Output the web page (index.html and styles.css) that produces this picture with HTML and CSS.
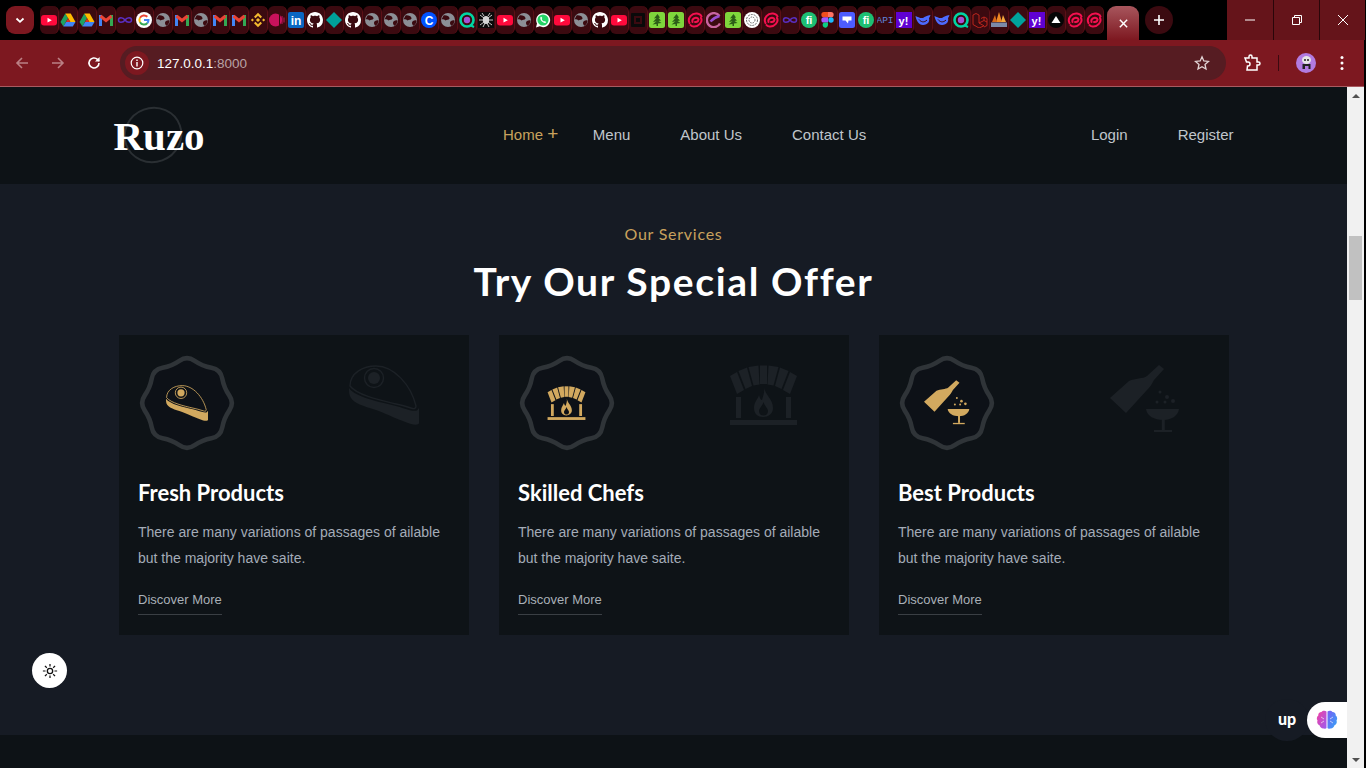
FILE: index.html
```html
<!DOCTYPE html>
<html lang="en">
<head>
<meta charset="utf-8">
<title>Ruzo</title>
<link rel="stylesheet" href="styles.css">
</head>
<body>
<svg class="defs" aria-hidden="true">
  <defs>
    <linearGradient id="brainL" x1="0" y1="0" x2="1" y2="1"><stop offset="0" stop-color="#f43fa0"/><stop offset="1" stop-color="#9a5cf0"/></linearGradient>
    <linearGradient id="brainR" x1="0" y1="0" x2="1" y2="1"><stop offset="0" stop-color="#7a5cf5"/><stop offset="1" stop-color="#2fa8f5"/></linearGradient>
    <symbol id="yt" viewBox="0 0 16 16"><rect y="3" width="16" height="10.500" rx="3" fill="#ff0a3c"/><polygon points="6.500,5.800 10.800,8.200 6.500,10.600" fill="#fff"/></symbol>
    <symbol id="drive" viewBox="0 0 16 16"><polygon points="5.300,1.500 8,6.300 3.400,14.500 .5,10" fill="#1ea362"/><polygon points="5.300,1.500 10.700,1.500 15.500,10 10.300,10" fill="#ffba00"/><polygon points="3.400,14.500 6,10 15.500,10 12.800,14.500" fill="#4285f4"/><polygon points="8,6.300 10.300,10 6,10" fill="#d93025"/></symbol>
    <symbol id="gmail" viewBox="0 0 16 16"><rect x="1" y="3" width="3" height="11" fill="#4285f4"/><rect x="12" y="3" width="3" height="11" fill="#34a853"/><path d="M2.500 4 8 8.500 13.500 4" fill="none" stroke="#ea4335" stroke-width="3"/></symbol>
    <symbol id="inf" viewBox="0 0 16 16"><path d="M8 8C6 5 1.500 5 1.500 8S6 11 8 8 14.500 5 14.500 8 10 11 8 8Z" fill="none" stroke="#5a2fc2" stroke-width="1.500"/></symbol>
    <symbol id="google" viewBox="0 0 16 16"><circle cx="8" cy="8" r="8" fill="#fff"/><path d="M11.300 4.800A4.600 4.600 0 0 0 4 5.800" fill="none" stroke="#ea4335" stroke-width="2"/><path d="M4 5.800A4.600 4.600 0 0 0 4 10.200" fill="none" stroke="#fbbc05" stroke-width="2"/><path d="M4 10.200A4.600 4.600 0 0 0 11.400 11" fill="none" stroke="#34a853" stroke-width="2"/><path d="M8 8H12.500A4.600 4.600 0 0 1 11.400 11" fill="none" stroke="#4285f4" stroke-width="2"/></symbol>
    <symbol id="globe" viewBox="0 0 16 16"><circle cx="8" cy="8" r="7" fill="#8c8f96"/><path d="M3.500 3.500C6 3 9 4 9.500 6 9.800 8 6.500 7.500 5.500 8.500 4.500 7.500 3 7 1.500 7.500ZM14.500 8.500C12.500 8 10 9 10 11 10 12.500 11 13.500 11.500 13.800 13.500 12.500 14.500 10.500 14.500 8.500Z" fill="#3b0a10"/></symbol>
    <symbol id="binance" viewBox="0 0 16 16"><g fill="#f3ba2f"><rect x="6.500" y="6.500" width="3" height="3" transform="rotate(45 8 8)"/><path d="M8 .8 12 4.800 10.500 6.300 8 3.800 5.500 6.300 4 4.800Z"/><path d="M8 15.200 12 11.200 10.500 9.700 8 12.200 5.500 9.700 4 11.200Z"/><rect x="1.300" y="6.900" width="2.200" height="2.200" transform="rotate(45 2.400 8)"/><rect x="12.500" y="6.900" width="2.200" height="2.200" transform="rotate(45 13.600 8)"/></g></symbol>
    <symbol id="pink" viewBox="0 0 16 16"><circle cx="6.500" cy="8" r="6.500" fill="#c8125c"/><rect x="10" y="3" width="1" height="10" fill="#3b0a10"/><rect x="12.500" y="4" width="1" height="8" fill="#c8125c"/><rect x="14.500" y="5.500" width="1" height="5" fill="#c8125c"/></symbol>
    <symbol id="in" viewBox="0 0 16 16"><rect width="16" height="16" rx="2" fill="#0a66c2"/><text x="8" y="13" class="fav-text" font-size="12" fill="#fff">in</text></symbol>
    <symbol id="gh" viewBox="0 0 16 16"><path fill="#fff" d="M8 0C3.580 0 0 3.580 0 8c0 3.540 2.290 6.530 5.470 7.590.4.070.55-.17.55-.38 0-.19-.01-.82-.01-1.490-2.010.37-2.530-.49-2.690-.94-.09-.23-.48-.94-.82-1.130-.28-.15-.68-.52-.01-.53.63-.01 1.080.58 1.230.82.720 1.210 1.870.87 2.330.66.070-.52.28-.87.51-1.070-1.780-.2-3.640-.89-3.640-3.950 0-.87.31-1.590.82-2.150-.08-.2-.36-1.020.08-2.120 0 0 .67-.21 2.200.82.64-.18 1.320-.27 2-.27.68 0 1.360.09 2 .27 1.530-1.040 2.200-.82 2.200-.82.44 1.100.16 1.920.08 2.120.51.56.82 1.270.82 2.150 0 3.070-1.870 3.750-3.650 3.950.29.25.54.73.54 1.480 0 1.070-.01 1.930-.01 2.200 0 .21.15.46.55.38A8.013 8.013 0 0 0 16 8c0-4.420-3.580-8-8-8z"/></symbol>
    <symbol id="dia" viewBox="0 0 16 16"><polygon points="8,0 16,8 8,16 0,8" fill="#00a19a"/></symbol>
    <symbol id="coin" viewBox="0 0 16 16"><circle cx="8" cy="8" r="8" fill="#0052ff"/><text x="8" y="12.500" class="fav-text" font-size="12" fill="#fff">C</text></symbol>
    <symbol id="q" viewBox="0 0 16 16"><circle cx="8" cy="8" r="6.500" fill="none" stroke="#00d6a3" stroke-width="2.600"/><circle cx="8" cy="8" r="3.200" fill="#a64fd6"/><path d="M11 13 15 15" stroke="#00d6a3" stroke-width="2"/></symbol>
    <symbol id="spider" viewBox="0 0 16 16"><rect width="16" height="16" fill="#0a0a0a"/><g stroke="#c9c9c9" stroke-width="1"><path d="M2 3 6 6M14 3 10 6M1 8H15M2 13 6 10M14 13 10 10M4 1 6 4M12 1 10 4M5 15 7 11M11 15 9 11"/></g><ellipse cx="8" cy="8" rx="3.200" ry="4" fill="#d5d5d5"/></symbol>
    <symbol id="wa" viewBox="0 0 16 16"><path d="M1 15.500 2 11.500A7 7 0 1 1 4.800 14.300Z" fill="#fff"/><circle cx="8" cy="8" r="5.600" fill="#25d366"/><path d="M5.500 5C5 6.500 5.500 8 7 9.500S10 11.300 11.300 10.500L10 9 9 9.500C8 9 7 8 6.700 7L7.300 6 6.300 4.700Z" fill="#fff"/></symbol>
    <symbol id="sq" viewBox="0 0 16 16"><rect x="1" y="1" width="14" height="14" rx="1" fill="#0a0a0a"/><rect x="5" y="5" width="6" height="6" fill="none" stroke="#3b0a10" stroke-width="2"/></symbol>
    <symbol id="tree" viewBox="0 0 16 16"><rect width="16" height="16" rx="2.500" fill="#7fd63c"/><path d="M8.500 2 5 6.500 7.500 6 4 10 7.500 9.200 3.500 12.500 7.500 12V14H9V11.500L12.500 11 9.500 9 12 8.500 9.500 6 11 5.500Z" fill="#2c5c18"/></symbol>
    <symbol id="swirl" viewBox="0 0 16 16"><g fill="none" stroke="#f5104f" stroke-width="2" stroke-linecap="round"><path d="M2.500 11C0 6 5 1 10 1.500 12.500 1.800 14 3 14.500 4.500"/><path d="M14 6C16 10 11.500 15 6.500 14.500 5 14.300 4 13.800 3.500 13"/><path d="M5.500 10C4.500 7 8.500 4.500 11 6.500 12.500 8 10.500 10.500 8 10"/></g></symbol>
    <symbol id="e" viewBox="0 0 16 16"><g fill="none" stroke-width="2.400"><path d="M13.500 4A7 7 0 1 0 14 11.500" stroke="#c8659f"/><path d="M4.500 9.500C7 6.500 10 5 13.500 4" stroke="#9a4fd0"/></g></symbol>
    <symbol id="oai" viewBox="0 0 16 16"><circle cx="8" cy="8" r="8" fill="#fff"/><g fill="none" stroke="#666"><circle cx="8" cy="8" r="5.500" stroke-dasharray="2 1"/><circle cx="8" cy="8" r="3" stroke-dasharray="1.500 1"/></g></symbol>
    <symbol id="fn" viewBox="0 0 16 16"><circle cx="8" cy="8" r="8" fill="#1dbf73"/><text x="8" y="12" class="fav-text" font-size="11" fill="#fff">fi</text></symbol>
    <symbol id="figma" viewBox="0 0 16 16"><path d="M4 0H8V5.300H4A2.600 2.600 0 0 1 4 0Z" fill="#f24e1e"/><path d="M8 0H11A2.600 2.600 0 0 1 11 5.300H8Z" fill="#ff7262"/><path d="M4 5.300H8V10.600H4A2.600 2.600 0 0 1 4 5.300Z" fill="#a259ff"/><circle cx="11" cy="8" r="2.700" fill="#1abcfe"/><path d="M4 10.600H8V13.300A2.700 2.700 0 1 1 4 10.600Z" fill="#0acf83"/></symbol>
    <symbol id="blue" viewBox="0 0 16 16"><rect width="16" height="16" rx="2.500" fill="#4d5cff"/><path d="M3.500 4.500H12.500V8.500L9.500 8.500 9 11.500 6.500 8.500H3.500Z" fill="#fff"/></symbol>
    <symbol id="api" viewBox="0 0 16 16"><text x="8" y="11" class="fav-mono" font-size="9.500" fill="#5f84dc">API</text></symbol>
    <symbol id="yahoo" viewBox="0 0 16 16"><rect width="16" height="16" fill="#6001d2"/><text x="7.500" y="12.500" class="fav-text" font-size="11" fill="#fff">y!</text></symbol>
    <symbol id="whale" viewBox="0 0 16 16"><path d="M.5 4C3 5 5 6.500 8 6 10 4.500 12 3.500 15.500 3 15 4.500 14.500 5.500 14 6 15 9 13 13 8 13 3.500 13 1 8 .5 4Z" fill="#4d6bfe"/><path d="M4 7.500C6 10 9 11 12 8" fill="none" stroke="#3b0a10"/></symbol>
    <symbol id="laravel" viewBox="0 0 16 16"><g fill="none" stroke="#c9281e" stroke-width=".9"><path d="M1 3 4 1.500 7 3V11L12 13.800 7 16 1 12.500ZM7 11 12 8.500 15 10V13.500L12 15M12 5 15 6.500V10M9 6.500 12 5V8.500"/></g></symbol>
    <symbol id="fire" viewBox="0 0 16 16"><polygon points="8,0 11,10 5,10" fill="#f08a24"/><polygon points="4,3 6,10 1,10" fill="#d96a18"/><polygon points="12,3 15,10 10,10" fill="#f5a83c"/><rect y="10.500" width="16" height="4.500" fill="#7c8aa8"/></symbol>
    <symbol id="vercel" viewBox="0 0 16 16"><circle cx="8" cy="8" r="8" fill="#050505"/><polygon points="8,4 12.500,11 3.500,11" fill="#fff"/></symbol>

    <symbol id="meat" viewBox="0 0 70 60">
      <path d="M1 21C1 8 14 1 27 1 45 1 62 20 67 41 67 44 65 44 62 43 56 41 50 39.500 45 38.500 30 35 8 30 1 21Z" fill="none" stroke="currentColor" stroke-width="1.400"/>
      <circle cx="25" cy="13" r="9.500" fill="none" stroke="currentColor" stroke-width="1.400"/>
      <circle cx="25" cy="13" r="6" fill="currentColor"/>
      <path d="M0 23C6 32 30 37 45 40.500 54 42.500 62 47 68 45.500L70 43V58C70 60 66 60 62 59 50 55 40 50 27 45 14 41 5 38 2 33 0 30 0 27 0 23Z" fill="currentColor"/>
    </symbol>
    <symbol id="oven" viewBox="0 0 69 60">
      <g fill="currentColor">
        <polygon points="1,11 8,7 15,25 8,29"/>
        <polygon points="9.500,6 18,2.500 23,21 16.500,24"/>
        <polygon points="19.500,2 29.500,.5 30.500,19.500 24.500,20.500"/>
        <polygon points="31,.5 38,.5 38,19 31,19"/>
        <polygon points="49.500,2 39.500,.5 38.500,19.500 44.500,20.500"/>
        <polygon points="59.500,6 51,2.500 46,21 52.500,24"/>
        <polygon points="68,11 61,7 54,25 61,29"/>
        <rect x="7" y="32" width="5" height="21"/>
        <rect x="57" y="32" width="5" height="21"/>
        <rect x="1" y="55" width="67" height="5"/>
        <path fill-rule="evenodd" d="M35 22C36 30 44 34 44 43 44 49 39 52 34 52 29 52 25 49 25 43 25 37 29 34 30 30 31 34 32 35 33 35 34 31 36 27 35 22ZM34.500 37C33.500 41 30 43 30 46 30 49 32 50.500 34.500 50.500S39 49 39 46C39 43 35.500 41 34.500 37Z"/>
      </g>
    </symbol>
    <symbol id="bottle" viewBox="0 0 70 68">
      <g fill="currentColor">
        <path d="M49 0 54 4 44 15C42 19 40 22 37 25L16 48 0 33 19 16C25 13 33 14 37 11Z"/>
        <path d="M36 44H69C68 51 61 55 53.500 55 44 55 37 51 36 44Z"/>
        <rect x="51.800" y="54" width="3" height="11"/>
        <rect x="44" y="65" width="18" height="2"/>
        <circle cx="50" cy="27" r="1.500"/><circle cx="57" cy="32" r="2"/><circle cx="47" cy="37" r="1.500"/><circle cx="55" cy="37" r="1.500"/><circle cx="63" cy="36" r="2"/>
      </g>
    </symbol>
    <symbol id="wave" viewBox="1 1 98 98">
      <path d="M42.350 7.770Q50 2.500 57.660 7.770Q65.310 13.040 74.450 14.730Q83.590 16.410 85.280 25.550Q86.960 34.690 92.230 42.350Q97.500 50 92.230 57.660Q86.960 65.310 85.280 74.450Q83.590 83.590 74.450 85.280Q65.310 86.960 57.660 92.230Q50 97.500 42.350 92.230Q34.690 86.960 25.550 85.280Q16.410 83.590 14.730 74.450Q13.040 65.310 7.770 57.660Q2.500 50 7.770 42.350Q13.040 34.690 14.730 25.550Q16.410 16.410 25.550 14.730Q34.690 13.040 42.350 7.770Z" fill="#0d1117" stroke="#2f3438" stroke-width="4.600"/>
    </symbol>
  </defs>
</svg>

<div class="window">
  <div class="tabstrip">
    <button class="tab-search" aria-label="Search tabs"><svg viewBox="0 0 12 12"><path d="M2.500 4.500 6 7.800 9.500 4.500" fill="none" stroke="#fff" stroke-width="1.800"/></svg></button>
    <div class="tabs">
      <span class="fav"><svg><use href="#yt"/></svg></span>
      <span class="fav"><svg><use href="#drive"/></svg></span>
      <span class="fav"><svg><use href="#drive"/></svg></span>
      <span class="fav"><svg><use href="#gmail"/></svg></span>
      <span class="fav"><svg><use href="#inf"/></svg></span>
      <span class="fav"><svg><use href="#google"/></svg></span>
      <span class="fav"><svg><use href="#globe"/></svg></span>
      <span class="fav"><svg><use href="#gmail"/></svg></span>
      <span class="fav"><svg><use href="#globe"/></svg></span>
      <span class="fav"><svg><use href="#gmail"/></svg></span>
      <span class="fav"><svg><use href="#gmail"/></svg></span>
      <span class="fav"><svg><use href="#binance"/></svg></span>
      <span class="fav"><svg><use href="#pink"/></svg></span>
      <span class="fav"><svg><use href="#in"/></svg></span>
      <span class="fav"><svg><use href="#gh"/></svg></span>
      <span class="fav"><svg><use href="#dia"/></svg></span>
      <span class="fav"><svg><use href="#gh"/></svg></span>
      <span class="fav"><svg><use href="#globe"/></svg></span>
      <span class="fav"><svg><use href="#globe"/></svg></span>
      <span class="fav"><svg><use href="#globe"/></svg></span>
      <span class="fav"><svg><use href="#coin"/></svg></span>
      <span class="fav"><svg><use href="#globe"/></svg></span>
      <span class="fav"><svg><use href="#q"/></svg></span>
      <span class="fav"><svg><use href="#spider"/></svg></span>
      <span class="fav"><svg><use href="#yt"/></svg></span>
      <span class="fav"><svg><use href="#globe"/></svg></span>
      <span class="fav"><svg><use href="#wa"/></svg></span>
      <span class="fav"><svg><use href="#yt"/></svg></span>
      <span class="fav"><svg><use href="#globe"/></svg></span>
      <span class="fav"><svg><use href="#gh"/></svg></span>
      <span class="fav"><svg><use href="#yt"/></svg></span>
      <span class="fav"><svg><use href="#sq"/></svg></span>
      <span class="fav"><svg><use href="#tree"/></svg></span>
      <span class="fav"><svg><use href="#tree"/></svg></span>
      <span class="fav"><svg><use href="#swirl"/></svg></span>
      <span class="fav"><svg><use href="#e"/></svg></span>
      <span class="fav"><svg><use href="#tree"/></svg></span>
      <span class="fav"><svg><use href="#oai"/></svg></span>
      <span class="fav"><svg><use href="#swirl"/></svg></span>
      <span class="fav"><svg><use href="#inf"/></svg></span>
      <span class="fav"><svg><use href="#fn"/></svg></span>
      <span class="fav"><svg><use href="#figma"/></svg></span>
      <span class="fav"><svg><use href="#blue"/></svg></span>
      <span class="fav"><svg><use href="#fn"/></svg></span>
      <span class="fav"><svg><use href="#api"/></svg></span>
      <span class="fav"><svg><use href="#yahoo"/></svg></span>
      <span class="fav"><svg><use href="#whale"/></svg></span>
      <span class="fav"><svg><use href="#whale"/></svg></span>
      <span class="fav"><svg><use href="#q"/></svg></span>
      <span class="fav"><svg><use href="#laravel"/></svg></span>
      <span class="fav"><svg><use href="#fire"/></svg></span>
      <span class="fav"><svg><use href="#dia"/></svg></span>
      <span class="fav"><svg><use href="#yahoo"/></svg></span>
      <span class="fav"><svg><use href="#vercel"/></svg></span>
      <span class="fav"><svg><use href="#swirl"/></svg></span>
      <span class="fav"><svg><use href="#swirl"/></svg></span>
    </div>
    <div class="tab-active"><svg viewBox="0 0 12 12"><path d="M2 2 10 10M10 2 2 10" stroke="#fff" stroke-width="1.600"/></svg></div>
    <button class="new-tab" aria-label="New tab"><svg viewBox="0 0 12 12"><path d="M6 1V11M1 6H11" stroke="#fff" stroke-width="1.600"/></svg></button>
    <div class="win-controls">
      <span class="win-btn"><svg viewBox="0 0 12 12"><path d="M1 6H11" stroke="#fff"/></svg></span>
      <span class="win-btn"><svg viewBox="0 0 12 12"><path d="M1.500 3.500H8.500V10.500H1.500ZM3.500 3.500V1.500H10.500V8.500H8.500" fill="none" stroke="#fff"/></svg></span>
      <span class="win-btn"><svg viewBox="0 0 12 12"><path d="M1 1 11 11M11 1 1 11" stroke="#fff"/></svg></span>
    </div>
  </div>

  <div class="toolbar">
    <span class="tool tool-dim"><svg viewBox="0 0 16 16"><path d="M14 8H3M8 3 3 8 8 13" fill="none" stroke="currentColor" stroke-width="1.600"/></svg></span>
    <span class="tool tool-dim"><svg viewBox="0 0 16 16"><path d="M2 8H13M8 3 13 8 8 13" fill="none" stroke="currentColor" stroke-width="1.600"/></svg></span>
    <span class="tool"><svg viewBox="0 0 16 16"><path d="M13 8A5 5 0 1 1 11.500 4.400L13 6" fill="none" stroke="currentColor" stroke-width="1.600"/><path d="M13.600 2V6.600H9Z" fill="currentColor"/></svg></span>
    <div class="omnibox">
      <span class="site-info"><svg viewBox="0 0 14 14"><circle cx="7" cy="7" r="5.800" fill="none" stroke="#fff" stroke-width="1.200"/><path d="M7 6V10.500M7 3.600V5" stroke="#fff" stroke-width="1.400"/></svg></span>
      <span class="url">127.0.0.1<span class="url-port">:8000</span></span>
      <svg class="star" viewBox="0 0 16 16"><path d="M8 1.800 9.800 6 14.500 6.400 11 9.500 12 14 8 11.700 4 14 5 9.500 1.500 6.400 6.200 6Z" fill="none" stroke="#e2d4d5" stroke-width="1.300"/></svg>
    </div>
    <div class="tool-right">
      <svg class="puzzle" viewBox="0 0 18 18"><path d="M2 4H6V2.500A1.500 1.500 0 0 1 9 2.500V4H14V8H15.500A1.500 1.500 0 0 1 15.500 11H14V16H4L4.500 12H5A2 2 0 0 0 5 8H3.500Z" fill="none" stroke="#fff" stroke-width="1.500"/></svg>
      <span class="tool-sep"></span>
      <span class="avatar"><svg viewBox="0 0 20 20"><circle cx="10" cy="10" r="10" fill="#b27be0"/><ellipse cx="10.500" cy="7" rx="4.500" ry="4" fill="#e6e6e6"/><path d="M6.500 16V11H14.500V16H12.500V13H9V16Z" fill="#222"/><circle cx="9" cy="7" r="1" fill="#222"/><circle cx="12" cy="7" r="1" fill="#222"/></svg></span>
      <svg class="kebab" viewBox="0 0 4 16"><circle cx="2" cy="2.500" r="1.500" fill="#fff"/><circle cx="2" cy="8" r="1.500" fill="#fff"/><circle cx="2" cy="13.500" r="1.500" fill="#fff"/></svg>
    </div>
  </div>

  <div class="viewport">
    <div class="page">
      <header class="site-header">
        <div class="header-inner">
          <a class="logo"><svg class="logo-ring" viewBox="0 0 60 58"><ellipse cx="30" cy="29" rx="28.500" ry="27" fill="none" stroke="#2a2f33" stroke-width="2" transform="rotate(-20 30 29)"/></svg><span class="logo-text">Ruzo</span></a>
          <nav class="nav">
            <a class="nav-link nav-home">Home <span class="nav-plus">+</span></a>
            <a class="nav-link">Menu</a>
            <a class="nav-link">About Us</a>
            <a class="nav-link">Contact Us</a>
          </nav>
          <div class="auth">
            <a class="nav-link">Login</a>
            <a class="nav-link">Register</a>
          </div>
        </div>
      </header>

      <section class="services">
        <p class="eyebrow">Our Services</p>
        <h1 class="section-title">Try Our Special Offer</h1>
        <div class="cards">
          <article class="card">
            <div class="card-icons">
              <div class="badge"><svg class="badge-shape"><use href="#wave"/></svg><svg class="icon-meat"><use href="#meat"/></svg></div>
              <svg class="ghost ghost-meat"><use href="#meat"/></svg>
            </div>
            <h2 class="card-title">Fresh Products</h2>
            <p class="card-text">There are many variations of passages of ailable but the majority have saite.</p>
            <a class="card-link">Discover More</a>
          </article>
          <article class="card">
            <div class="card-icons">
              <div class="badge"><svg class="badge-shape"><use href="#wave"/></svg><svg class="icon-oven"><use href="#oven"/></svg></div>
              <svg class="ghost ghost-oven"><use href="#oven"/></svg>
            </div>
            <h2 class="card-title">Skilled Chefs</h2>
            <p class="card-text">There are many variations of passages of ailable but the majority have saite.</p>
            <a class="card-link">Discover More</a>
          </article>
          <article class="card">
            <div class="card-icons">
              <div class="badge"><svg class="badge-shape"><use href="#wave"/></svg><svg class="icon-bottle"><use href="#bottle"/></svg></div>
              <svg class="ghost ghost-bottle"><use href="#bottle"/></svg>
            </div>
            <h2 class="card-title">Best Products</h2>
            <p class="card-text">There are many variations of passages of ailable but the majority have saite.</p>
            <a class="card-link">Discover More</a>
          </article>
        </div>
      </section>
      <footer class="next-section"></footer>

      <button class="theme-toggle" aria-label="Toggle theme"><svg viewBox="0 0 18 18"><circle cx="9" cy="9" r="3" fill="none" stroke="#111" stroke-width="1.500"/><path d="M9 1V4M9 14V17M1 9H4M14 9H17M3.300 3.300 5.400 5.400M12.600 12.600 14.700 14.700M14.700 3.300 12.600 5.400M5.400 12.600 3.300 14.700" stroke="#111" stroke-width="1.400"/></svg></button>
      <span class="up-badge">up</span>
      <span class="brain-pill"><svg viewBox="0 0 22 20"><path d="M10.500 1.500C9 .3 6.500.5 5.500 2 3.500 2 2 3.500 2.300 5.500.7 6.800.3 9 1.500 10.500.7 12.500 1.500 14.500 3.500 15.300 4 17.500 6 19 8 18.500 9 19 10 18.800 10.500 18Z" fill="url(#brainL)"/><path d="M11.500 1.500C13 .3 15.500.5 16.500 2 18.500 2 20 3.500 19.700 5.500 21.300 6.800 21.700 9 20.500 10.500 21.300 12.500 20.500 14.500 18.500 15.300 18 17.500 16 19 14 18.500 13 19 12 18.800 11.500 18Z" fill="url(#brainR)"/><path d="M5 7 8 9M5 13 8 11M17 7 14 9M17 13 14 11" stroke="#fff" stroke-opacity=".6" fill="none"/></svg></span>
    </div>
    <div class="scrollbar">
      <span class="sb-btn"><span class="sb-up"></span></span>
      <div class="sb-track"><span class="sb-thumb"></span></div>
      <span class="sb-btn"><span class="sb-down"></span></span>
    </div>
  </div>
</div>
</body>
</html>
```

FILE: styles.css
```css
* { box-sizing: border-box; }
html, body { margin: 0; height: 768px; overflow: hidden; background: #000; }
body { font-family: "Liberation Sans", Arial, sans-serif; }
.defs { width: 0; height: 0; overflow: hidden; position: absolute; }
a { color: inherit; text-decoration: none; }
button { border: 0; padding: 0; }
svg { display: block; }
.fav-text { font-family: "Liberation Sans", sans-serif; font-weight: 700; text-anchor: middle; }
.fav-mono { font-family: "Liberation Mono", monospace; text-anchor: middle; }

.window { width: 1366px; height: 768px; display: flex; flex-direction: column; }

/* tab strip */
.tabstrip { height: 40px; flex: none; display: flex; align-items: flex-start; padding: 6px 0 0 6px; background: #000; }
.tab-search { width: 28px; height: 28px; background: #7d1820; border-radius: 9px; display: grid; place-items: center; margin-right: 6px; flex: none; }
.tab-search svg { width: 12px; height: 12px; }
.tabs { display: flex; width: 1064px; flex: none; margin-right: 3px; }
.fav { width: 19px; height: 28px; flex: none; display: grid; place-items: center; background: #3b0a10; border-radius: 6px; border-right: 1px solid #5c1017; }
.fav svg { width: 16px; height: 16px; }
.tab-active { width: 32px; height: 34px; flex: none; border-radius: 9px 9px 0 0; background: linear-gradient(#a8565d, #7d1820); display: grid; place-items: center; }
.tab-active svg { width: 11px; height: 11px; }
.new-tab { width: 28px; height: 28px; flex: none; border-radius: 50%; background: #3b0a10; display: grid; place-items: center; margin-left: 6px; }
.new-tab svg { width: 12px; height: 12px; }
.win-controls { display: flex; margin: -6px 0 0 54px; height: 40px; flex: none; }
.win-btn { width: 46px; height: 40px; background: #65141a; display: grid; place-items: center; border-left: 1px solid #2a0609; }
.win-btn:first-child { border-left: 0; }
.win-btn svg { width: 12px; height: 12px; }

/* toolbar */
.toolbar { height: 47px; width: 1364px; flex: none; display: flex; align-items: center; padding: 0 0 1px 4px; background: #7d1820; border-bottom: 1px solid #a85a60; }
.tool { width: 36px; height: 36px; display: grid; place-items: center; color: #fff; flex: none; }
.tool-dim { color: #bb8085; }
.tool svg { width: 16px; height: 16px; }
.omnibox { width: 1106px; height: 34px; margin-left: 8px; flex: none; display: flex; align-items: center; background: #561c22; border-radius: 17px; padding: 0 16px 0 5px; }
.site-info { width: 24px; height: 24px; border-radius: 50%; background: #7d1820; display: grid; place-items: center; }
.site-info svg { width: 14px; height: 14px; }
.url { font-size: 13.5px; line-height: 18px; padding-top: 2px; color: #fff; margin-left: 8px; }
.url-port { color: #b9a3a5; }
.star { width: 16px; height: 16px; margin-left: auto; }
.tool-right { display: flex; align-items: center; margin-left: 17px; }
.puzzle { width: 18px; height: 18px; }
.tool-sep { width: 1px; height: 16px; background: #3b0a10; margin: 0 17px 0 17px; }
.avatar { width: 20px; height: 20px; }
.kebab { width: 4px; height: 16px; margin-left: 24px; }

/* page */
.viewport { flex: 1; width: 1364px; display: flex; min-height: 0; }
.page { position: relative; flex: 1; overflow: hidden; background: #161b24; display: flex; flex-direction: column; }
.site-header { height: 97px; flex: none; background: #0d1216; }
.header-inner { width: 1120px; height: 97px; margin: 0 auto; display: flex; align-items: center; color: #c0c6cc; font-size: 15px; }
.logo { display: grid; width: 92px; height: 60px; place-items: center start; }
.logo-ring { grid-area: 1 / 1; width: 60px; height: 58px; margin: -2px 0 0 9px; }
.logo-text { grid-area: 1 / 1; font-family: "Liberation Serif", serif; font-weight: 700; font-size: 41px; color: #fff; }
.nav { display: flex; gap: 50px; margin-left: 297.5px; position: relative; top: -1px; }
.nav-home { color: #c9a25d; margin-right: -15.5px; }
.nav-plus { font-size: 19px; line-height: 15px; }
.auth { display: flex; gap: 50px; margin-left: auto; position: relative; top: -1px; }

.services { flex: none; height: 551px; padding-top: 38px; display: flex; flex-direction: column; align-items: center; }
.eyebrow { margin: 0; font-family: "Lato", sans-serif; font-size: 16px; line-height: 24px; letter-spacing: .75px; color: #c9a25d; }
.section-title { margin: 10px 0 0; font-family: "Lato", sans-serif; font-size: 39px; line-height: 50px; font-weight: 700; letter-spacing: 1.65px; color: #fff; }
.cards { display: flex; gap: 30px; margin-top: 29px; }
.card { width: 350px; height: 300px; background: #0e1317; padding: 18.5px 19.5px 0; }
.card-icons { display: flex; justify-content: space-between; align-items: flex-start; height: 98px; padding-right: 30.5px; }
.badge { display: grid; place-items: center; width: 98px; height: 98px; margin-left: -.5px; }
.badge > svg { grid-area: 1 / 1; }
.badge-shape { width: 98px; height: 98px; }
.icon-meat { width: 42px; height: 36px; color: #d2a95f; }
.icon-oven { width: 39px; height: 34px; color: #d2a95f; }
.icon-bottle { width: 46px; height: 45px; color: #d2a95f; margin-left: 1px; }
.ghost { color: #1c2126; margin-top: 11.5px; }
.ghost-meat { width: 70px; height: 60px; }
.ghost-oven { width: 69px; height: 60px; margin-right: 1px; }
.ghost-bottle { width: 70px; height: 68px; margin-right: -1.5px; }
.card-title { margin: 26px 0 0; font-family: "Lato", sans-serif; font-size: 22px; line-height: 30px; font-weight: 700; color: #fff; }
.card-text { margin: 11.5px 0 0; font-size: 14px; line-height: 26px; color: #a4acb8; }
.card-link { display: inline-block; margin-top: 20px; padding-bottom: 5px; font-size: 13px; line-height: 18px; color: #a9b0b8; border-bottom: 1px solid #3a3f44; }
.next-section { flex: 1; background: #0d1216; }

/* floating */
.theme-toggle { position: absolute; left: 32px; top: 566px; width: 35px; height: 35px; border-radius: 50%; background: #fff; display: grid; place-items: center; }
.theme-toggle svg { width: 16px; height: 16px; }
.up-badge { position: absolute; left: 1265px; top: 612px; width: 44px; height: 42px; border-radius: 50%; background: #161b24; color: #fff; font-family: "Lato", sans-serif; font-weight: 900; font-size: 16px; line-height: 40px; text-align: center; }
.brain-pill { position: absolute; right: 0; top: 615px; width: 40px; height: 36px; background: #fff; border-radius: 18px 0 0 18px; display: grid; place-items: center; }
.brain-pill svg { width: 22px; height: 20px; }

/* scrollbar */
.scrollbar { width: 17px; flex: none; background: #f1f1f1; display: flex; flex-direction: column; }
.sb-btn { height: 17px; display: grid; place-items: center; flex: none; }
.sb-up { width: 0; height: 0; border: 4px solid transparent; border-top: 0; border-bottom: 4px solid #505050; }
.sb-down { width: 0; height: 0; border: 4px solid transparent; border-bottom: 0; border-top: 4px solid #505050; }
.sb-track { flex: 1; padding: 132px 2px 0; }
.sb-thumb { display: block; height: 64px; background: #c1c1c1; }
```
